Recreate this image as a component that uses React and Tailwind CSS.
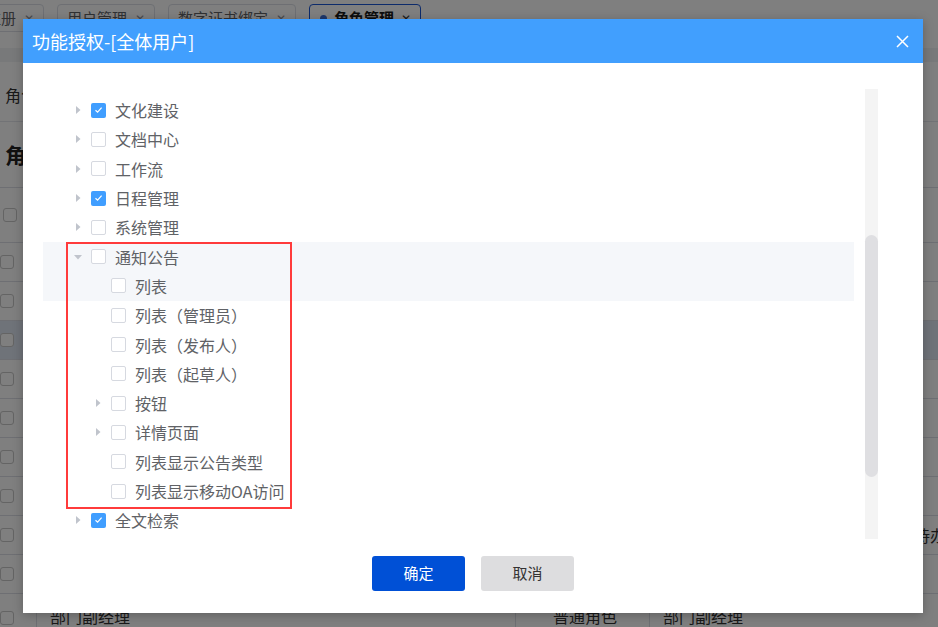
import React from 'react'

const tree = [
  { label: '文化建设', level: 0, arrow: 'right', checked: true },
  { label: '文档中心', level: 0, arrow: 'right' },
  { label: '工作流', level: 0, arrow: 'right' },
  { label: '日程管理', level: 0, arrow: 'right', checked: true },
  { label: '系统管理', level: 0, arrow: 'right' },
]

const noticeChildren = [
  { label: '列表（管理员）', level: 1 },
  { label: '列表（发布人）', level: 1 },
  { label: '列表（起草人）', level: 1 },
  { label: '按钮', level: 1, arrow: 'right' },
  { label: '详情页面', level: 1, arrow: 'right' },
  { label: '列表显示公告类型', level: 1 },
  { label: '列表显示移动OA访问', level: 1 },
  { label: '全文检索', level: 0, arrow: 'right', checked: true },
]

function Caret({ dir }) {
  if (!dir) return <span className="w-[8px] shrink-0" />
  if (dir === 'down') {
    return (
      <svg width="8" height="8" viewBox="0 0 8 8" className="shrink-0">
        <polygon points="0,2 8,2 4,6.5" fill="#c0c4cc" />
      </svg>
    )
  }
  return (
    <svg width="8" height="8" viewBox="0 0 8 8" className="shrink-0">
      <polygon points="2,0 6.5,4 2,8" fill="#c0c4cc" />
    </svg>
  )
}

function Checkbox({ checked }) {
  if (checked) {
    return (
      <span className="w-[15px] h-[15px] shrink-0 rounded-[2px] bg-[#409eff] flex items-center justify-center">
        <svg width="9" height="8" viewBox="0 0 9 8">
          <polyline points="1.5,4.2 3.6,6.2 7.6,1.6" fill="none" stroke="white" strokeWidth="1.2" />
        </svg>
      </span>
    )
  }
  return <span className="block w-[15px] h-[15px] shrink-0 rounded-[2px] border border-[#d6d9e0] bg-white" />
}

function TreeRow({ item }) {
  return (
    <div className={`h-[29.3px] flex items-center ${item.level === 1 ? 'pl-[51px]' : 'pl-[31px]'}`}>
      <Caret dir={item.arrow} />
      <span className="ml-[9px] flex"><Checkbox checked={item.checked} /></span>
      <span className="ml-[9px] text-[16px] text-[#606266] leading-none">{item.label}</span>
    </div>
  )
}

function BgCheckbox() {
  return <span className="w-[14px] h-[14px] rounded-[3px] border border-[#c8c8c8] bg-white inline-block" />
}

function App() {
  const rows = Array.from({ length: 9 })
  return (
    <div className="relative w-[938px] h-[627px] overflow-hidden bg-white font-['Noto_Sans_CJK_SC','Microsoft_YaHei',sans-serif]">
      {/* page behind the dialog */}
      <div className="h-[48px] flex items-start pt-[4px] gap-[13px] ml-[-54px]">
        {['用户注册', '用户管理', '数字证书绑定'].map(t => (
          <div key={t} className="h-[28px] px-[9px] flex items-center gap-[8px] border border-[#dcdfe6] rounded-[4px] text-[15px] text-[#606266]">
            {t}<span className="text-[12px] text-[#909399]">✕</span>
          </div>
        ))}
        <div className="h-[28px] pl-[10px] pr-[9px] flex items-center gap-[7px] border border-[#1a56d6] rounded-[4px] text-[15px] font-bold text-[#1a1a1a]">
          <span className="w-[7px] h-[7px] rounded-full bg-[#3a6fd8]" />角色管理<span className="text-[12px] font-normal text-[#333]">✕</span>
        </div>
      </div>
      <div className="h-[14px] bg-[#f0f2f5]" />
      <div className="h-[60px] flex items-center pl-[5px] pt-[6px] text-[16px] text-[#333] border-b border-[#e4e7ed]">角色名称</div>
      <div className="h-[66px] flex items-center pl-[5px] text-[21px] font-bold text-[#222] border-b border-[#dcdfe6]">角色管理</div>
      <div className="h-[55px] flex items-center pl-[3px] border-b border-[#dcdfe6]"><BgCheckbox /></div>
      {rows.map((_, i) => (
        <div key={i} className={`h-[39px] flex items-center border-b border-[#dcdfe6] ${i === 2 ? 'bg-[#dfe7f3]' : ''}`}>
          <span className="w-[37px] flex items-center"><BgCheckbox /></span>
          {i === 7 && <span className="ml-auto mr-[-8px] text-[16px] text-[#333]">待办</span>}
        </div>
      ))}
      <div className="h-[39px] flex items-start border-b border-[#dcdfe6] text-[16px] text-[#333]">
        <span className="w-[37px] pt-[12px] border-r border-[#dcdfe6] h-full"><BgCheckbox /></span>
        <span className="w-[479px] pl-[13px] pt-[10px] border-r border-[#dcdfe6] h-full">部门副经理</span>
        <span className="w-[134px] pl-[37px] pt-[10px] border-r border-[#dcdfe6] h-full">普通角色</span>
        <span className="pl-[13px] pt-[10px]">部门副经理</span>
      </div>

      {/* mask */}
      <div className="absolute inset-0 bg-black/50" />

      {/* dialog */}
      <div className="absolute left-[23px] top-[19px] w-[900px] h-[594px] bg-white shadow-[0_2px_10px_rgba(0,0,0,0.25)] flex flex-col">
        <div className="h-[44px] bg-[#419ffe] flex items-center justify-between pl-[9px] pr-[14px]">
          <span className="text-[18px] text-white leading-none">功能授权-[全体用户]</span>
          <svg width="13" height="13" viewBox="0 0 13 13">
            <path d="M1 1 L12 12 M12 1 L1 12" stroke="white" strokeWidth="1.5" fill="none" />
          </svg>
        </div>

        <div className="pt-[26px] pl-[20px] flex">
          <div className="relative w-[811px] h-[450px] overflow-hidden pt-[6.5px]">
            {tree.map(item => <TreeRow key={item.label} item={item} />)}
            <div className="bg-[#f5f7fa]">
              <TreeRow item={{ label: '通知公告', level: 0, arrow: 'down' }} />
              <TreeRow item={{ label: '列表', level: 1 }} />
            </div>
            {noticeChildren.map(item => <TreeRow key={item.label} item={item} />)}
            <div className="absolute left-[23px] top-[153px] w-[226px] h-[267px] border-2 border-[#ff3b3b] pointer-events-none" />
          </div>
          <div className="ml-[11px] w-[13px] h-[450px] bg-[#f4f4f4] flex flex-col">
            <div className="h-[146px]" />
            <div className="h-[242px] rounded-full bg-[#dfdfe2]" />
          </div>
        </div>

        <div className="pt-[17px] flex justify-center gap-[16px]">
          <button className="w-[93px] h-[35px] rounded-[3px] bg-[#0050d6] text-white text-[15px]">确定</button>
          <button className="w-[93px] h-[35px] rounded-[3px] bg-[#dddddf] text-[#333] text-[15px]">取消</button>
        </div>
      </div>
    </div>
  )
}

export default App
